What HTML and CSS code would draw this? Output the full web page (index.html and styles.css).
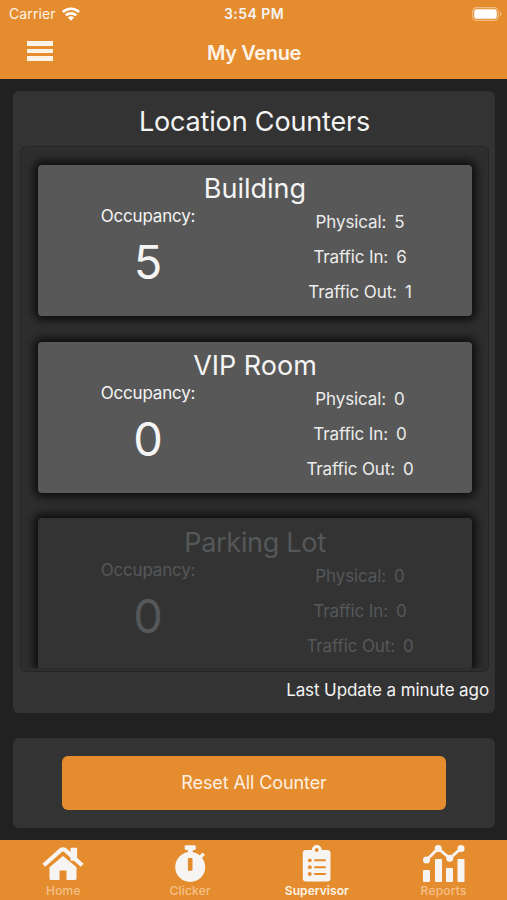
FILE: index.html
```html
<!DOCTYPE html>
<html lang="en">
<head>
<meta charset="utf-8">
<title>My Venue</title>
<link rel="stylesheet" href="styles.css">
</head>
<body>
<header class="header">
  <div class="status">
    <div class="carrier"><span class="carrier-name">Carrier</span>
      <svg class="wifi" width="18" height="14" viewBox="0 0 18 14"><g fill="none" stroke="#fff" stroke-width="2.700"><path d="M.9 5.100a11.500 11.500 0 0 1 16.200 0"/><path d="M3.800 8.400a7.500 7.500 0 0 1 10.400 0"/></g><path d="M9 13.700l-3.100-3.100a4.400 4.400 0 0 1 6.200 0z" fill="#fff"/></svg>
    </div>
    <span class="time">3:54 PM</span>
    <div class="battery-wrap"><svg width="30" height="14" viewBox="0 0 30 14"><rect x=".7" y=".7" width="25.600" height="12.600" rx="3.800" fill="none" stroke="#fff" stroke-opacity=".42" stroke-width="1.200"/><rect x="2.200" y="2.200" width="22.600" height="9.600" rx="2.400" fill="#fff"/><path d="M28 4.800c1.800.5 1.800 3.900 0 4.400z" fill="#fff" fill-opacity=".45"/></svg></div>
  </div>
  <div class="nav">
    <div class="menu"><i></i><i></i><i></i></div>
    <h1 class="title">My Venue</h1>
    <div></div>
  </div>
</header>
<main class="main">
  <section class="panel counters">
    <h2 class="heading"><span>Location Counters</span></h2>
    <div class="list"><div class="clip">
      <article class="card">
        <h3 class="name">Building</h3>
        <div class="cols">
          <div class="occ"><span class="label">Occupancy:</span><span class="big">5</span></div>
          <div class="stats"><p>Physical:<b>5</b></p><p>Traffic In:<b>6</b></p><p>Traffic Out:<b>1</b></p></div>
        </div>
      </article>
      <article class="card">
        <h3 class="name">VIP Room</h3>
        <div class="cols">
          <div class="occ"><span class="label">Occupancy:</span><span class="big">0</span></div>
          <div class="stats"><p>Physical:<b>0</b></p><p>Traffic In:<b>0</b></p><p>Traffic Out:<b>0</b></p></div>
        </div>
      </article>
      <article class="card off">
        <h3 class="name parking">Parking Lot</h3>
        <div class="cols">
          <div class="occ"><span class="label">Occupancy:</span><span class="big">0</span></div>
          <div class="stats"><p>Physical:<b>0</b></p><p>Traffic In:<b>0</b></p><p>Traffic Out:<b>0</b></p></div>
        </div>
      </article>
    </div></div>
    <p class="updated">Last Update a minute ago</p>
  </section>
  <section class="panel reset">
    <button class="btn" type="button">Reset All Counter</button>
  </section>
</main>
<nav class="tabs">
  <a class="tab"><svg width="42" height="38" viewBox="0 0 42 38"><g fill="#f7f5f4"><path d="M29.500 3.700h4.600q1 0 1 1v12h-6.600v-12q0-1 1-1z"/><path d="M7.500 23.200L21 12l13.500 11.200v11.300q0 1.500-1.500 1.500h-8.500v-9.500h-7V36H9q-1.500 0-1.500-1.500z"/></g><path d="M1.800 21.200L18.800 6.200q2.200-1.800 4.400 0L40.200 21.200" fill="none" stroke="#f7f5f4" stroke-width="4.200"/></svg><span>Home</span></a>
  <a class="tab"><svg width="42" height="38" viewBox="0 0 42 38"><g fill="#f7f5f4"><path d="M16.700 1.300h9q1 0 1 1V5q0 1-1 1h-9q-1 0-1-1V2.300q0-1 1-1z"/><path d="M18.800 5h5v5h-5z"/><path d="M30 12l3.600-3.400 2.300 2.300-3.600 3.700z"/><circle cx="21.200" cy="23" r="15"/></g><rect x="18.900" y="14" width="4.600" height="12.800" rx=".8" fill="#e58d2e"/></svg><span>Clicker</span></a>
  <a class="tab on"><svg width="42" height="38" viewBox="0 0 42 38"><path d="M10 6h5.800a5 5 0 0 1 10 0h5.400q3.300 0 3.300 3.300v25q0 3.200-3.300 3.200H10q-3.200 0-3.200-3.200v-25Q6.800 6 10 6z" fill="#f7f5f4"/><g fill="#e58d2e"><circle cx="20.700" cy="6" r="1.900"/><circle cx="13.800" cy="16.300" r="1.900"/><circle cx="13.800" cy="23.200" r="1.900"/><circle cx="13.800" cy="30" r="1.900"/><path d="M18.200 15.300h11.600v2H18.200zM18.200 22.200h11.600v2H18.200zM18.200 29h11.600v2H18.200z"/></g></svg><span>Supervisor</span></a>
  <a class="tab"><svg width="42" height="38" viewBox="0 0 42 38"><g fill="#f7f5f4"><rect x="0" y="26" width="7" height="12" rx=".8"/><rect x="12" y="15" width="7" height="23" rx=".8"/><rect x="23" y="24" width="7" height="14" rx=".8"/><rect x="34.500" y="15" width="7" height="23" rx=".8"/><circle cx="3.500" cy="16" r="3.500"/><circle cx="15.200" cy="4.500" r="3.500"/><circle cx="26.800" cy="14.300" r="3.500"/><circle cx="38" cy="4.500" r="3.500"/></g><path d="M3.500 16L15.200 4.500l11.600 9.800L38 4.500" fill="none" stroke="#f7f5f4" stroke-width="2.800"/></svg><span>Reports</span></a>
</nav>
</body>
</html>
```
FILE: styles.css
```css
* { box-sizing: border-box; margin: 0; padding: 0; }
body {
  width: 507px; height: 900px; overflow: hidden;
  display: flex; flex-direction: column;
  background: #212121; color: #f4f4f4;
  font-family: Inter, "Liberation Sans", sans-serif;
}
.header { height: 79px; flex: none; background: #e58d2e; }
.status {
  height: 27px; padding: 0 5px 0 9px;
  display: grid; grid-template-columns: 1fr auto 1fr; align-items: center;
}
.carrier { display: flex; align-items: center; gap: 6px; }
.carrier-name { font-size: 14px; letter-spacing: .1px; line-height: 27px; color: #fdf3e8; }
.wifi { display: block; }
.time { font-size: 14px; font-weight: 600; letter-spacing: .45px; line-height: 27px; padding-right: 3px; }
.battery-wrap { display: flex; justify-content: flex-end; }
.battery-wrap svg { display: block; }
.nav { height: 52px; padding: 0 26px 0 27px; display: grid; grid-template-columns: 1fr auto 1fr; align-items: center; }
.menu { display: grid; gap: 3px; width: 26px; padding-bottom: 4px; }
.menu i { height: 4.500px; background: #fdf3e8; }
.title { font-size: 20px; font-weight: 600; letter-spacing: -.35px; line-height: 50px; color: #fdf3e8; }
.main { flex: 1; padding: 12px 12px 0 13px; }
.panel { background: #333; border-radius: 6px; }
.counters { height: 622px; padding: 0 6px 0 7px; }
.heading { height: 55px; line-height: 61px; text-align: center; font-size: 27px; font-weight: 400; letter-spacing: -.17px; }
.list { height: 526px; padding: 0 2px 4px; border: 1px solid #262626; border-radius: 6px; background: #2e2e2e; }
.clip { height: 521px; padding: 18px 14px 0 15px; overflow: hidden; }
.card {
  height: 151px; margin-bottom: 25.700px; padding-top: 4px;
  background: #585858; border-radius: 4px;
  box-shadow: 0 0 10px 4px rgba(0, 0, 0, .75);
}
.off { background: #333; color: #55585a; }
.name { height: 38px; line-height: 39px; text-align: center; font-size: 27px; font-weight: 400; }
.parking { letter-spacing: -.3px; }
.off .name { padding-top: 1px; }
.cols { display: grid; grid-template-columns: 1fr 1fr; }
.occ { display: flex; flex-direction: column; align-items: center; padding-left: 3px; }
.label { height: 18px; line-height: 18px; font-size: 17px; letter-spacing: -.2px; }
.big { height: 74px; line-height: 73px; font-size: 47px; }
.stats { padding: 0 7px 0 0; text-align: center; font-size: 17px; letter-spacing: -.12px; color: #ececec; }
.stats b { font-weight: 400; margin-left: 8px; }
.off .stats { color: inherit; }
.stats p { height: 35px; line-height: 30px; white-space: nowrap; }
.off .cols { padding-top: 1px; }
.updated { height: 40px; line-height: 37px; text-align: right; font-size: 17px; letter-spacing: -.1px; }
.reset { height: 90px; margin-top: 25px; padding: 18px 49px; }
.btn {
  display: block; width: 384px; height: 54px; border: 0; border-radius: 6px;
  background: #e58d2e; color: #fdf0e2; font: 400 18px/54px Inter, sans-serif; letter-spacing: -.1px;
}
.tabs { height: 60px; flex: none; display: grid; grid-template-columns: repeat(4, 1fr); background: #e58d2e; }
.tab { display: flex; flex-direction: column; align-items: center; padding-top: 4px; color: #f4c08a; font-size: 12px; font-weight: 500; letter-spacing: .2px; }
.tab svg { display: block; }
.tab span { line-height: 18px; }
.on { color: #fdf3e8; font-weight: 600; letter-spacing: .05px; }
```
